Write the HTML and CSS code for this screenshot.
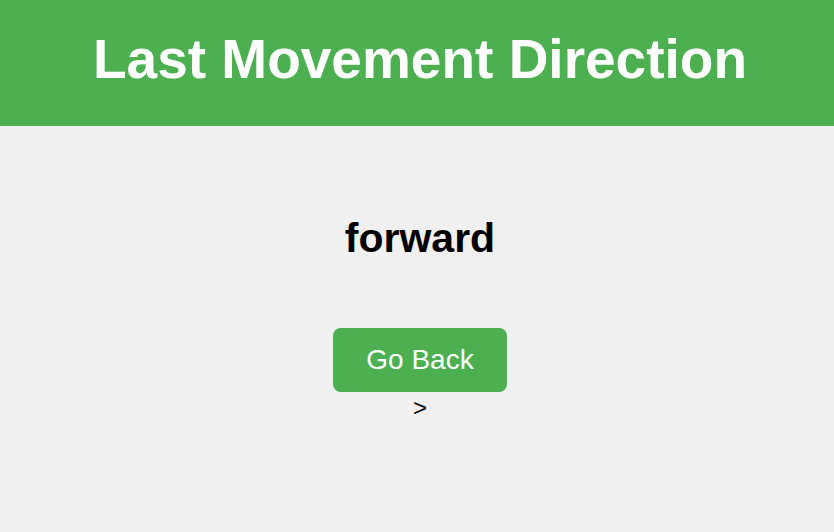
FILE: index.html
```html
<!DOCTYPE html>
<html lang="en">
<head>
<meta charset="utf-8">
<title>Last Movement Direction</title>
<link rel="stylesheet" href="styles.css">
</head>
<body>
<header class="top-bar">
  <h1 class="title">Last Movement Direction</h1>
</header>
<main class="content">
  <p class="direction">forward</p>
  <button class="back-btn" type="button">Go Back</button>
  <div class="stray">&gt;</div>
</main>
</body>
</html>
```

FILE: styles.css
```css
html, body {
  margin: 0;
  padding: 0;
}
body {
  background: #f0f0f0;
  font-family: "Liberation Sans", Arial, sans-serif;
  color: #000;
}
.top-bar {
  background: #4caf50;
  padding: 27px 0 34px 6px;
  text-align: center;
}
.title {
  margin: 0;
  color: #fff;
  font-size: 55px;
  line-height: 65px;
  font-weight: bold;
}
.content {
  display: flex;
  flex-direction: column;
  align-items: center;
  padding-left: 6px;
}
.direction {
  margin: 89px 0 0;
  font-size: 41px;
  line-height: 46px;
  font-weight: bold;
}
.back-btn {
  margin-top: 67px;
  background: #4caf50;
  color: #fff;
  border: none;
  border-radius: 8px;
  font-family: "Liberation Sans", Arial, sans-serif;
  font-size: 28px;
  line-height: 32px;
  padding: 16px 33px;
  cursor: pointer;
}
.stray {
  margin-top: 2px;
  font-size: 24px;
  line-height: 28px;
}
```
